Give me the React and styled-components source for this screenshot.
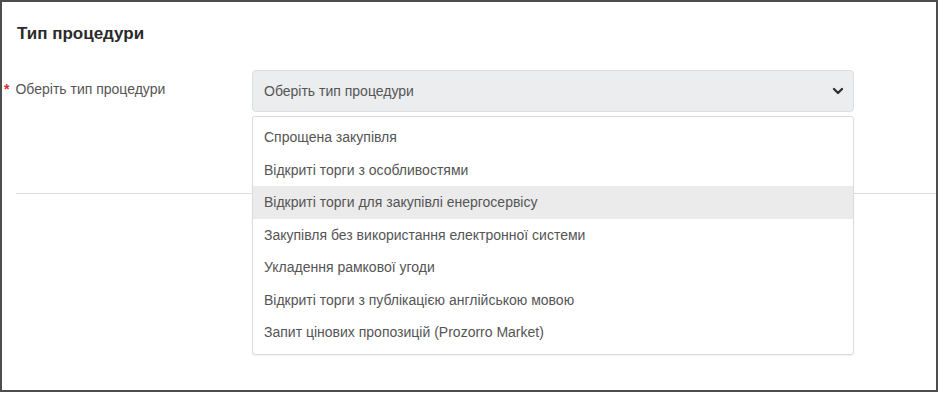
import React from "react";
import styled, { createGlobalStyle } from "styled-components";

const Global = createGlobalStyle`
  html, body { margin: 0; padding: 0; background: #ffffff; }
  body { font-family: "Liberation Sans", Arial, sans-serif; }
  * { box-sizing: border-box; }
`;

const Frame = styled.div`
  width: 938px;
  height: 392px;
  border: 2px solid #4d4d4d;
  background: #fff;
  padding-top: 21px;
  position: relative;
`;

const Title = styled.h2`
  margin: 0 0 25px 15px;
  font-size: 17px;
  line-height: 22px;
  font-weight: 700;
  color: #2b2b2b;
`;

const Row = styled.div`
  display: flex;
  align-items: flex-start;
  padding-left: 2px;
`;

const Label = styled.label`
  width: 248px;
  padding-top: 9px;
  font-size: 14px;
  line-height: 20px;
  color: #555555;
  display: flex;
  gap: 6px;
`;

const Star = styled.span`
  color: #e0262b;
  font-weight: 700;
  font-size: 14px;
`;

const SelectWrap = styled.div`
  position: relative;
  width: 602px;
`;

const SelectBox = styled.div`
  height: 42px;
  border: 1px solid #dddee0;
  border-radius: 4px;
  background: #ecedee;
  display: flex;
  align-items: center;
  justify-content: space-between;
  padding: 0 9px 0 11px;
  font-size: 14px;
  color: #555555;
`;

const Menu = styled.ul`
  position: absolute;
  top: 46px;
  left: 0;
  width: 602px;
  margin: 0;
  padding: 4px 0 5px;
  list-style: none;
  background: #fff;
  border: 1px solid #dcdcdc;
  border-radius: 3px;
  box-shadow: 0 1px 2px rgba(0, 0, 0, 0.06);
  z-index: 2;
`;

const Item = styled.li`
  height: 32.5px;
  display: flex;
  align-items: center;
  padding-left: 11px;
  font-size: 14px;
  color: #555555;
  background: ${(p) => (p.$active ? "#ebebec" : "transparent")};
`;

const Divider = styled.hr`
  margin: 81px 0 0 14px;
  border: 0;
  border-top: 1px solid #dcdcdc;
`;

const Chevron = () => (
  <svg width="12" height="10" viewBox="0 0 12 10">
    <polyline
      points="2,3 6,7 10,3"
      fill="none"
      stroke="#333"
      strokeWidth="2.4"
      strokeLinecap="round"
      strokeLinejoin="round"
    />
  </svg>
);

const options = [
  "Спрощена закупівля",
  "Відкриті торги з особливостями",
  "Відкриті торги для закупівлі енергосервісу",
  "Закупівля без використання електронної системи",
  "Укладення рамкової угоди",
  "Відкриті торги з публікацією англійською мовою",
  "Запит цінових пропозицій (Prozorro Market)",
];

export default function App() {
  return (
    <>
      <Global />
      <Frame>
        <Title>Тип процедури</Title>
        <Row>
          <Label>
            <Star>*</Star>
            Оберіть тип процедури
          </Label>
          <SelectWrap>
            <SelectBox>
              <span>Оберіть тип процедури</span>
              <Chevron />
            </SelectBox>
            <Menu>
              {options.map((o, i) => (
                <Item key={o} $active={i === 2}>
                  {o}
                </Item>
              ))}
            </Menu>
          </SelectWrap>
        </Row>
        <Divider />
      </Frame>
    </>
  );
}
